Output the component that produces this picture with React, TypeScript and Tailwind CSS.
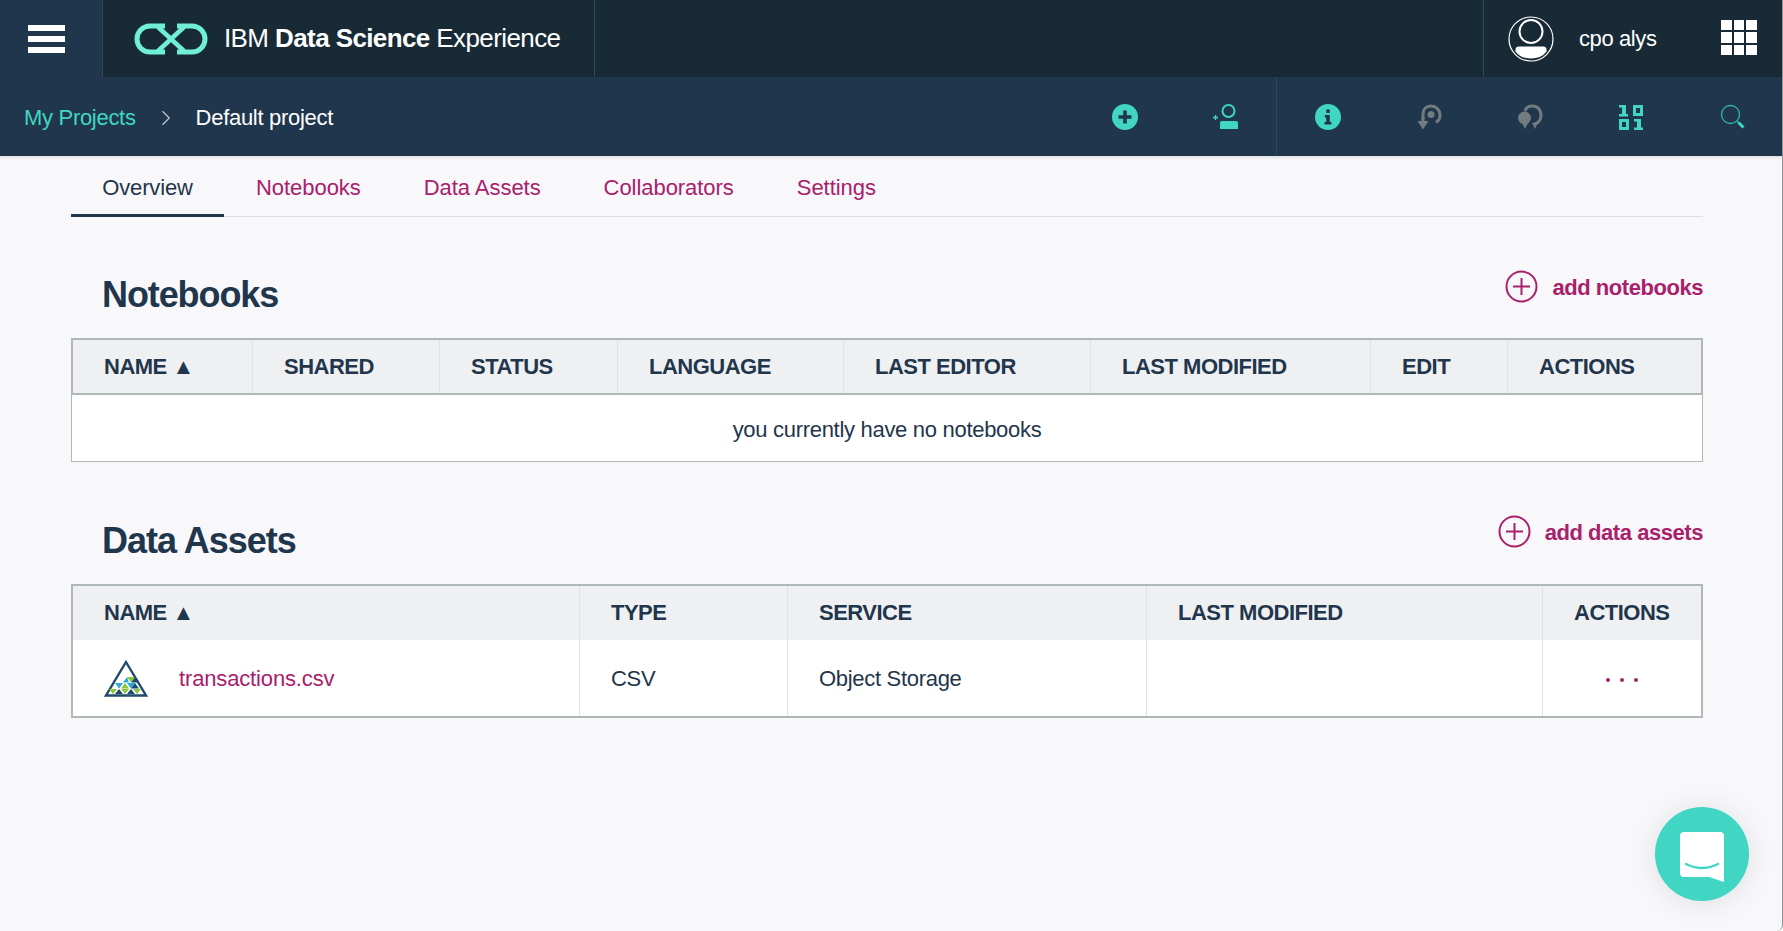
import type { ReactNode } from 'react';
import { ChevronRight } from 'lucide-react';

const teal = '#40d6c3';
const grey = '#727c80';

function Logo() {
  return (
    <svg width="74" height="34" viewBox="0 0 74 34" fill="none" stroke="#6fefd8" strokeWidth="5">
      <path d="M31 4H16A13 13 0 0 0 16 30H31" />
      <path d="M43 4H58A13 13 0 0 1 58 30H43" />
      <path d="M24 5L50 29M24 29L50 5" strokeWidth="4.500" />
    </svg>
  );
}

function Avatar() {
  return (
    <svg width="46" height="46" viewBox="0 0 46 46" fill="none">
      <ellipse cx="23" cy="23" rx="22" ry="22" stroke="#fff" strokeWidth="1.200" />
      <circle cx="23" cy="15.500" r="11.500" stroke="#fff" strokeWidth="2" />
      <path d="M11 30.500h24q3.500 0 3.500 3v2q-5 7-15.500 7t-15.500-7v-2q0-3 3.500-3z" fill="#fff" />
    </svg>
  );
}

function AppGrid() {
  return (
    <div className="grid grid-cols-3 gap-[2px] w-[36px]">
      {Array.from({ length: 9 }).map((_, i) => (
        <span key={i} className="w-[10.5px] h-[10.5px] bg-white" />
      ))}
    </div>
  );
}

function NavIcons() {
  return (
    <div className="flex items-center h-full">
      <div className="flex items-center h-full border-r border-[#2b4a60]">
        <div className="w-[101px] flex justify-center">
          <svg width="26" height="26" viewBox="0 0 26 26">
            <circle cx="13" cy="13" r="13" fill={teal} />
            <path d="M13 6.500v13M6.500 13h13" stroke="#1f364c" strokeWidth="3.600" />
          </svg>
        </div>
        <div className="w-[101px] flex justify-center pl-[1px]">
          <svg width="28" height="26" viewBox="0 0 28 26" fill="none">
            <path d="M1 13.500h5M3.500 11v5" stroke={teal} strokeWidth="1.400" />
            <circle cx="16.500" cy="7" r="6" stroke={teal} strokeWidth="2" />
            <path d="M8 19q0-2 2-2h14q2 0 2 2v6H8z" fill={teal} />
          </svg>
        </div>
      </div>
      <div className="w-[101px] flex justify-center">
        <svg width="26" height="26" viewBox="0 0 26 26">
          <circle cx="13" cy="13" r="13" fill={teal} />
          <rect x="11.200" y="5.500" width="3.600" height="3.400" fill="#1f364c" />
          <path d="M9.800 11h5v7h1.600v2.400H9.500V18h1.700v-4.600H9.800z" fill="#1f364c" />
        </svg>
      </div>
      <div className="w-[102px] flex justify-center">
        <svg width="26" height="26" viewBox="0 0 26 26" fill="none">
          <path d="M7 15V10C7 5 10.500 2 15 2C20 2 24 6 24 11C24 14.500 22.500 17 20 18.500" stroke={grey} strokeWidth="3" />
          <circle cx="15" cy="10.500" r="3.500" fill={grey} />
          <path d="M7 25.500L1.500 17H5.500V13H8.500V17H12.500Z" fill={grey} />
        </svg>
      </div>
      <div className="w-[100px] flex justify-center">
        <svg width="26" height="26" viewBox="0 0 26 26" fill="none">
          <path d="M8 7C9 3.500 12 2 15.500 2C20.500 2 24 6 24 11C24 15 22 18.500 18 20" stroke={grey} strokeWidth="3" />
          <circle cx="7.500" cy="14" r="6.500" fill={grey} />
          <path d="M5 19L8 25L11 19Z" fill={grey} />
          <path d="M15 19L18 25L21 18Z" fill={grey} />
        </svg>
      </div>
      <div className="w-[103px] flex justify-center pr-[1px]">
        <svg width="26" height="26" viewBox="0 0 26 26" fill={teal}>
          <path d="M1 1h7v9h2v2.500H1V10h3V3.500H1z" />
          <path fillRule="evenodd" d="M15 1h10v11H15zM18 4v5h4V4z" />
          <path fillRule="evenodd" d="M1 15h10v11H1zM4 18v5h4v-5z" />
          <path d="M16 15h7v8.500h2V26h-9v-2.500h3V17.500h-3z" />
        </svg>
      </div>
      <div className="w-[99px] flex justify-center">
        <svg width="26" height="26" viewBox="0 0 26 26" fill="none">
          <circle cx="10.500" cy="10.500" r="9" stroke="#2fb8ad" strokeWidth="1.300" />
          <path d="M17 17l2 2" stroke="#2fb8ad" strokeWidth="1.300" />
          <path d="M18.500 18.500l5 5" stroke={teal} strokeWidth="3" />
        </svg>
      </div>
    </div>
  );
}

function AddLink({ label, className }: { label: string; className: string }) {
  return (
    <a className={`flex items-center gap-[14px] text-[#a9206b] text-[22px] font-bold tracking-[-0.45px] cursor-pointer ${className}`}>
      <svg width="33" height="33" viewBox="0 0 33 33" fill="none" stroke="#a9206b">
        <circle cx="16.500" cy="16.500" r="15" strokeWidth="2" />
        <path d="M16.500 8v17M8 16.500h17" strokeWidth="2" />
      </svg>
      <span className="pt-[2px]">{label}</span>
    </a>
  );
}

function HeadCell({ label, last }: { label: string; last?: boolean }) {
  return (
    <div className={`flex items-center pl-[31px] pb-[1px] text-[22px] font-bold tracking-[-0.5px] text-[#1f364c] ${last ? '' : 'border-r border-[#dfe2e4]'}`}>
      {label}
    </div>
  );
}

function DatasetIcon() {
  return (
    <svg width="44" height="39" viewBox="0 0 44 39" className="shrink-0">
      <path d="M22 3L42 36.500H2Z" fill="#fff" stroke="#1f4a6b" strokeWidth="2.400" />
      <path d="M23 18h8l-4 5.500z" fill="#8cc63f" />
      <path d="M27 23.500l4-5.500 4 5.500z" fill="#1f4a6b" />
      <path d="M19 23.500l4-5.500 2 5.500z" fill="#29abd4" />
      <path d="M11 24h8l-4 5.500zM23 24h8l-4 5.500z" fill="#29abd4" />
      <path d="M17 29.500l4-5.500 4 5.500z" fill="#8cc63f" />
      <path d="M27 29.500l4-5.500 4 5.500z" fill="#1f4a6b" />
      <path d="M5 30h8l-4 5zM17 30h8l-4 5zM29 30h8l-4 5z" fill="#8cc63f" />
      <path d="M11 35l4-5 4 5zM23 35l4-5 4 5z" fill="#1f4a6b" />
    </svg>
  );
}

function BodyCell({ children, last }: { children?: ReactNode; last?: boolean }) {
  return (
    <div className={`flex items-center pl-[31px] text-[22px] tracking-[-0.3px] text-[#1f364c] ${last ? '' : 'border-r border-[#dfe2e4]'}`}>
      {children}
    </div>
  );
}

export default function App() {
  const tabs = ['Notebooks', 'Data Assets', 'Collaborators', 'Settings'];
  const notebookCols = ['NAME ▲', 'SHARED', 'STATUS', 'LANGUAGE', 'LAST EDITOR', 'LAST MODIFIED', 'EDIT', 'ACTIONS'];
  const assetCols = ['NAME ▲', 'TYPE', 'SERVICE', 'LAST MODIFIED', 'ACTIONS'];

  return (
    <div className="relative h-[931px] overflow-hidden rounded-br-[6px] bg-[#f8f8fb] border-r border-[#8f9396] font-['Liberation_Sans',Arial,sans-serif] text-[#1f364c]">
      <header className="flex h-[77px] bg-[#182a36] text-white">
        <div className="w-[103px] bg-[#1f364c] flex items-center pl-[28px] border-r border-[#2b4a60]">
          <div className="w-[37px] flex flex-col gap-[5px]">
            <span className="h-[6px] bg-white" />
            <span className="h-[6px] bg-white" />
            <span className="h-[6px] bg-white" />
          </div>
        </div>
        <div className="w-[492px] flex items-center pl-[31px] gap-[16px] border-r border-[#2b4a60]">
          <Logo />
          <span className="text-[26px] tracking-[-0.6px] whitespace-nowrap">IBM <b>Data Science</b> Experience</span>
        </div>
        <div className="flex-1" />
        <div className="w-[299px] flex items-center border-l border-[#2b4a60] pl-[24px]">
          <Avatar />
          <span className="ml-[25px] text-[22px] tracking-[-0.4px]">cpo alys</span>
          <div className="ml-auto mr-[25px] mb-[2px]">
            <AppGrid />
          </div>
        </div>
      </header>

      <nav className="flex items-center justify-between h-[79px] bg-[#1f364c] pl-[24px] shadow-[0_1px_3px_rgba(0,0,0,0.15)]">
        <div className="flex items-center pt-[2px] text-[22px] tracking-[-0.3px]">
          <span className="text-[#40d6c3]">My Projects</span>
          <ChevronRight size={26} strokeWidth={1} className="mx-[17px] text-[#c4ccd2]" />
          <span className="text-white">Default project</span>
        </div>
        <NavIcons />
      </nav>

      <main className="pl-[71px] pr-[79px]">
        <div className="flex h-[61px] border-b border-[#dcdfe3]">
          <div className="w-[153px] h-[61px] pt-[4px] flex items-center justify-center border-b-[3px] border-[#1f364c] text-[22px] tracking-[-0.15px]">
            Overview
          </div>
          <div className="flex items-center gap-[63px] pl-[32px] pt-[3px] text-[22px] tracking-[-0.05px] text-[#a9206b]">
            {tabs.map((t) => (
              <span key={t}>{t}</span>
            ))}
          </div>
        </div>

        <section className="mt-[50px]">
          <div className="flex items-start justify-between h-[71px]">
            <h2 className="pl-[31px] pt-[6px] text-[36px] leading-[44px] font-bold tracking-[-1.1px]">Notebooks</h2>
            <AddLink label="add notebooks" className="mt-[2px]" />
          </div>
          <div className="border-2 border-[#aeb8b8] border-b-0 grid grid-cols-[180px_187px_178px_226px_247px_280px_137px_1fr] h-[55px] bg-[#eff0f2]">
            {notebookCols.map((c, i) => (
              <HeadCell key={c} label={c} last={i === notebookCols.length - 1} />
            ))}
          </div>
          <div className="border border-t-2 border-[#aeb8b8] h-[69px] pt-[2px] bg-white flex items-center justify-center text-[22px] tracking-[-0.3px]">
            you currently have no notebooks
          </div>
        </section>

        <section className="mt-[50px]">
          <div className="flex items-start justify-between h-[72px]">
            <h2 className="pl-[31px] pt-[7px] text-[36px] leading-[44px] font-bold tracking-[-1px]">Data Assets</h2>
            <AddLink label="add data assets" className="mt-[2px]" />
          </div>
          <div className="border-2 border-[#aeb8b8]">
            <div className="grid grid-cols-[507px_208px_359px_396px_1fr] h-[54px] bg-[#eff0f2]">
              {assetCols.map((c, i) => (
                <HeadCell key={c} label={c} last={i === assetCols.length - 1} />
              ))}
            </div>
            <div className="grid grid-cols-[507px_208px_359px_396px_1fr] h-[76px] bg-white">
              <BodyCell>
                <DatasetIcon />
                <span className="ml-[31px] tracking-[-0.15px] text-[#a9206b]">transactions.csv</span>
              </BodyCell>
              <BodyCell>CSV</BodyCell>
              <BodyCell>Object Storage</BodyCell>
              <BodyCell />
              <BodyCell last>
                <span className="ml-[32px] mt-[3px] flex gap-[10px]">
                  <span className="w-[4px] h-[4px] rounded-full bg-[#a9206b]" />
                  <span className="w-[4px] h-[4px] rounded-full bg-[#a9206b]" />
                  <span className="w-[4px] h-[4px] rounded-full bg-[#a9206b]" />
                </span>
              </BodyCell>
            </div>
          </div>
        </section>
      </main>

      <div className="absolute right-[33px] bottom-[30px] w-[94px] h-[94px] rounded-full bg-[#40d6c3] flex items-center justify-center shadow-[0_2px_30px_rgba(0,0,0,0.1)]">
        <svg width="44" height="50" viewBox="0 0 44 50" className="mt-[5px]">
          <path d="M4 0h36a4 4 0 0 1 4 4v46l-15-5H4a4 4 0 0 1-4-4V4a4 4 0 0 1 4-4z" fill="#fff" />
          <path d="M6 32q16 8 32 0" fill="none" stroke="#40d6c3" strokeWidth="2.500" strokeLinecap="round" />
        </svg>
      </div>
    </div>
  );
}
